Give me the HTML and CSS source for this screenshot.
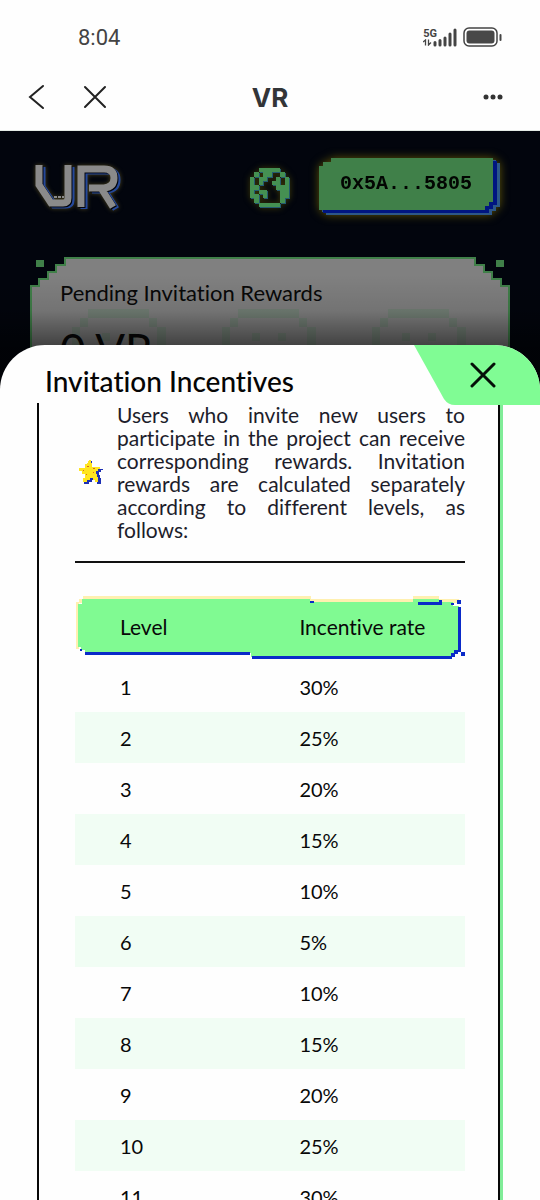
FILE: index.html
```
<!DOCTYPE html>
<html lang="en">
<head>
    <meta charset="UTF-8">
    <meta name="viewport" content="width=device-width, initial-scale=1.0">
    <title>VR</title>
    <link rel="stylesheet" href="styles.css">
</head>
<body>
    <div class="app">
        <!-- Status bar -->
        <div class="status-bar">
            <span class="time">8:04</span>
            <div class="status-icons">
                <div class="network">
                    <span>5G</span>
                    <svg width="9" height="7" viewBox="0 0 9 7" fill="none" stroke="#444" stroke-width="1.3"><path d="M0 3l2.500-2v5.500M5.500 0.500v5.500l2.500-2.500"/></svg>
                </div>
                <svg class="signal" width="24" height="19" viewBox="0 0 24 19" stroke="#444" stroke-width="3" stroke-linecap="round"><path d="M2 14.500v2.500M7 12.500v4.500M12 10v7M17 6v11M22 2v15"/></svg>
                <svg width="40" height="20" viewBox="0 0 40 20"><rect x="1" y="1" width="33" height="18" rx="5" fill="#fff" stroke="#444" stroke-width="1.500"/><rect x="3.500" y="3.500" width="28" height="13" rx="3" fill="#484848"/><path d="M37.500 8v5" stroke="#444" stroke-width="2" stroke-linecap="round"/></svg>
            </div>
        </div>

        <!-- Title bar -->
        <header class="title-bar">
            <div class="title-left">
                <button aria-label="Back"><svg width="26" height="26" viewBox="0 0 26 26"><path d="M19 2L6 13l13 11"/></svg></button>
                <button aria-label="Close page"><svg width="26" height="26" viewBox="0 0 26 26"><path d="M3 3l20 20M23 3L3 23"/></svg></button>
            </div>
            <h1>VR</h1>
            <button class="more" aria-label="More"><svg width="20" height="26" viewBox="0 0 20 26" fill="#333"><circle cx="3" cy="13" r="2.500"/><circle cx="10" cy="13" r="2.500"/><circle cx="17" cy="13" r="2.500"/></svg></button>
        </header>

        <main class="stage">
            <div class="site-header">
                <svg class="logo" width="86" height="44" viewBox="0 0 86 44" fill="none" stroke-width="7" role="img" aria-label="VR">
                    <g stroke="#24489a" transform="translate(3 2)">
                        <path d="M4 0V20L16 38H28Q33 38 33 33V0"/>
                        <path d="M46 42V4H69Q79 4 79 13T69 23H54M66 23L78 42"/>
                    </g>
                    <g stroke="#02050d" transform="translate(1 1)">
                        <path d="M4 0V20L16 38H28Q33 38 33 33V0"/>
                        <path d="M46 42V4H69Q79 4 79 13T69 23H54M66 23L78 42"/>
                    </g>
                    <g stroke="#8a8a8a">
                        <path d="M4 0V20L16 38H28Q33 38 33 33V0"/>
                        <path d="M46 42V4H69Q79 4 79 13T69 23H54M66 23L78 42"/>
                        <path d="M19 32H29" stroke-width="2" stroke-dasharray="3 1"/>
                    </g>
                </svg>
                <div class="account">
                    <button class="language" aria-label="Language">
                        <svg width="39" height="39" viewBox="0 0 9 9" shape-rendering="crispEdges">
                            <path d="M2 0h5v1h-5zM1 1h1v1h-1zM3 1h2v1h-2zM7 1h1v1h-1zM0 2h1v5h-1zM8 2h1v5h-1zM2 2h2v1h-2zM6 2h1v1h-1zM2 3h1v1h-1zM5 3h2v1h-2zM1 4h1v1h-1zM6 4h2v1h-2zM2 5h2v1h-2zM7 5h1v1h-1zM1 6h1v1h-1zM3 6h1v1h-1zM7 6h1v1h-1zM1 7h1v1h-1zM7 7h1v1h-1zM2 8h5v1h-5z"/>
                        </svg>
                    </button>
                    <button class="wallet"><span>0x5A...5805</span></button>
                </div>
            </div>

            <section class="rewards">
                <div class="rewards-frame">
                    <div class="rewards-body">
                        <h2>Pending Invitation Rewards</h2>
                        <p>0 VR</p>
                    </div>
                </div>
            </section>

            <!-- Bottom sheet -->
            <section class="sheet" aria-labelledby="sheet-title">
                <div class="sheet-header">
                    <h2 id="sheet-title">Invitation Incentives</h2>
                    <button class="sheet-close" aria-label="Close">
                        <svg width="126" height="60" viewBox="0 0 126 60"><path d="M0 0H126V60H41Q34 60 30 54Z" fill="#80fc94"/></svg>
                        <svg class="cross" width="26" height="26" viewBox="0 0 26 26"><path d="M2 2l22 22M24 2L2 24"/></svg>
                    </button>
                </div>
                <div class="panel">
                    <div class="intro">
                        <svg class="star" width="26" height="26" viewBox="0 0 26 26" shape-rendering="crispEdges">
                            <path d="M12 2h2v6h1v2h10v1h-2v2h-2v3h1v3h1v6h-4v-2h-2v-2h-3v2h-3v2h-5v-3h2v-4z" fill="#1c2fb4"/>
                            <path d="M11 1h2v3h1v4h8v2h-2v2h-2v3h1v3h1v5h-3v-2h-2v-2h-3v2h-3v2h-4v-4h2v-4h-3v-3h-3v-3h6v-4h2z" fill="#ffe51f"/>
                            <path d="M9 7h2v1h-2zM5 11h1v1h-1zM15 9h2v1h-2zM8 15h1v1h-1zM15 13h1v1h-1z" fill="#d56a20"/>
                        </svg>
                        <p>Users who invite new users to participate in the project can receive corresponding rewards. Invitation rewards are calculated separately according to different levels, as follows:</p>
                    </div>
                    <table class="rates">
                        <thead>
                            <tr><th scope="col">Level</th><th scope="col">Incentive rate</th></tr>
                        </thead>
                        <tbody>
                            <tr><td>1</td><td>30%</td></tr>
                            <tr><td>2</td><td>25%</td></tr>
                            <tr><td>3</td><td>20%</td></tr>
                            <tr><td>4</td><td>15%</td></tr>
                            <tr><td>5</td><td>10%</td></tr>
                            <tr><td>6</td><td>5%</td></tr>
                            <tr><td>7</td><td>10%</td></tr>
                            <tr><td>8</td><td>15%</td></tr>
                            <tr><td>9</td><td>20%</td></tr>
                            <tr><td>10</td><td>25%</td></tr>
                            <tr><td>11</td><td>30%</td></tr>
                        </tbody>
                    </table>
                </div>
            </section>
        </main>
    </div>
</body>
</html>
```
FILE: styles.css
```
* {
    box-sizing: border-box;
}

body, html {
    margin: 0;
    padding: 0;
    font-family: Lato, 'Noto Sans', sans-serif;
    font-variant-ligatures: none;
    background: #fefefe;
}

h1, h2, p {
    margin: 0;
}

button {
    padding: 0;
    border: none;
    background: none;
    cursor: pointer;
}

svg {
    display: block;
}

.app {
    height: 100vh;
    display: flex;
    flex-direction: column;
    overflow: hidden;
}

/* Status bar */
.status-bar {
    height: 66px;
    padding: 8px 37px 0 78px;
    display: flex;
    align-items: center;
    justify-content: space-between;
    color: #444;
}

.time {
    font: 22px Roboto, sans-serif;
}

.status-icons {
    display: flex;
    align-items: center;
    gap: 6px;
}

.network {
    font: bold 11px/11px Roboto, sans-serif;
}

.signal {
    margin-left: -10px;
}

/* Title bar */
.title-bar {
    height: 65px;
    padding: 0 37px 3px 24px;
    display: grid;
    grid-template-columns: 1fr auto 1fr;
    align-items: center;
    border-bottom: 1px solid #e4ebe6;
}

.title-left {
    display: flex;
    gap: 32px;
}

.title-bar h1 {
    font: bold 26px Inter, sans-serif;
    color: #333538;
    padding: 2px 0 0 13px;
}

.title-bar path {
    fill: none;
    stroke: #222;
    stroke-width: 2;
    stroke-linecap: round;
}

.more {
    justify-self: end;
}

/* Dimmed page behind the sheet */
.stage {
    flex: 1;
    min-height: 0;
    position: relative;
    background: #02050d;
}

.site-header {
    height: 112px;
    padding: 0 47px 0 35px;
    display: flex;
    align-items: center;
    justify-content: space-between;
}

.logo {
    overflow: visible;
    filter: drop-shadow(0 0 2px #4a421c);
}

.account {
    display: flex;
    align-items: center;
    gap: 30px;
}

.language svg {
    fill: #459052;
    filter: drop-shadow(1px 1px 0 #235a70) drop-shadow(0 0 3px #3c3806);
}

.wallet {
    margin-bottom: 6px;
    filter: drop-shadow(4px 3px 0 #001580) drop-shadow(3px 2px 0 #2d5788) drop-shadow(0 0 5px #5c5205);
}

.wallet span {
    display: block;
    padding: 0 21px;
    font: bold 20px/52px 'Liberation Mono', monospace;
    color: #020502;
    background: #408049;
    clip-path: polygon(12px 0, 100% 0, 100% calc(100% - 8px), calc(100% - 4px) calc(100% - 8px), calc(100% - 4px) calc(100% - 4px), calc(100% - 8px) calc(100% - 4px), calc(100% - 8px) 100%, 0 100%, 0 8px, 4px 8px, 4px 4px, 12px 4px);
}

.rewards {
    margin: 14px 30px 0;
    background:
        linear-gradient(#408049, #408049) 6px 3px / 8px 7px no-repeat,
        linear-gradient(#408049, #408049) calc(100% - 6px) 3px / 8px 7px no-repeat;
}

.rewards-frame,
.rewards-body {
    clip-path: polygon(
        0 28px, 8px 28px, 8px 21px, 17px 21px, 17px 14px, 25px 14px, 25px 7px, 34px 7px, 34px 0,
        calc(100% - 34px) 0, calc(100% - 34px) 7px, calc(100% - 25px) 7px, calc(100% - 25px) 14px, calc(100% - 17px) 14px, calc(100% - 17px) 21px, calc(100% - 8px) 21px, calc(100% - 8px) 28px, 100% 28px,
        100% 100%, 0 100%);
}

.rewards-frame {
    padding: 2px;
    background: #408049;
}

.rewards-body {
    height: 150px;
    padding: 20px 28px;
    color: #080808;
    background: #808080 url("data:image/svg+xml,%3Csvg xmlns='http://www.w3.org/2000/svg' width='150' height='98' fill='%23458050' fill-opacity='.22'%3E%3Cpath d='M16 0h61v9H16zM8 9h8v9H8zM77 9h8v9h-8zM0 18h8v80H0zM85 18h9v80h-9zM30 24h8v8h-8zM56 24h8v8h-8z'/%3E%3C/svg%3E") 40px 50px repeat-x;
}

.rewards-body h2 {
    font-size: 22px;
    line-height: 28px;
    font-weight: normal;
}

.rewards-body p {
    margin-top: 18px;
    font-size: 44px;
    line-height: 48px;
}

/* Shade over the page just above the sheet */
.stage::after {
    content: '';
    position: absolute;
    top: 144px;
    left: 0;
    right: 0;
    height: 120px;
    background: linear-gradient(transparent, rgba(0, 0, 0, 0.1) 30%, rgba(0, 0, 0, 0.5) 60%);
}

/* Bottom sheet */
.sheet {
    position: absolute;
    top: 214px;
    right: 0;
    bottom: 0;
    left: 0;
    z-index: 1;
    overflow: hidden;
    background: #fefefe;
    border-radius: 45px 45px 0 0;
}

.sheet-header {
    height: 58px;
    padding: 14px 0 0 45px;
    display: flex;
    align-items: center;
}

.sheet-header h2 {
    font-size: 28px;
    line-height: 36px;
    font-weight: 500;
    color: #050505;
}

.sheet-close {
    position: absolute;
    top: 0;
    right: 0;
}

.sheet-close .cross {
    position: absolute;
    top: 17px;
    right: 44px;
    stroke: #050f08;
    stroke-width: 3;
    stroke-linecap: round;
}

.panel {
    margin: 0 40px 0 37px;
    padding: 0 33px 0 36px;
    border: solid #080808;
    border-width: 0 2px;
    box-shadow: 3px 0 0 #80ec98;
}

.intro {
    display: flex;
    align-items: center;
    gap: 13px;
    padding: 0 0 20px 3px;
    border-bottom: 2px solid #111;
}

.star {
    flex: none;
}

.intro p {
    font-size: 21px;
    line-height: 23px;
    text-align: justify;
    color: #1d1d2b;
}

/* Incentive rates */
.rates {
    width: 100%;
    margin-top: 32px;
    border-collapse: collapse;
    table-layout: fixed;
    font-size: 20px;
    color: #080808;
}

.rates th,
.rates td {
    padding: 0 0 0 45px;
    text-align: left;
    font-weight: normal;
}

.rates th {
    height: 66px;
    padding-bottom: 4px;
    font-size: 21px;
}

.rates th:first-child {
    width: 46%;
}

/* Pixel frame: yellow glow, green plate, blue edge */
.rates thead tr {
    background: url("data:image/svg+xml,%3Csvg xmlns='http://www.w3.org/2000/svg' viewBox='0 0 390 66' preserveAspectRatio='none' shape-rendering='crispEdges'%3E%3Cpath fill='%23fff0b0' d='M8 1h228v3h102v-3h26v3h20v4H1v-1h3v-3h4zM1 8h3v46h-3z'/%3E%3Cpath fill='%2380fa92' d='M7 4h228v3h103v-3h26v3h14v4h6v44h-4v4h-4v3H176v-4H10v-3H6v-3H3V9h4z'/%3E%3Cpath fill='%230a2ac8' d='M10 57h165v3H10zM177 61h200v3H177zM376 58h4v4h-4zM379 55h4v4h-4zM383 12h3v45h-3zM343 7h24v3h-24zM364 5h3v3h-3zM235 6h4v2h-4zM376 8h3v2h-3zM382 5h4v4h-4zM386 57h4v4h-4zM5 54h2v2h-2z'/%3E%3C/svg%3E") 0 0 / 100% 100% no-repeat;
}

.rates td {
    height: 51px;
}

.rates tbody tr:nth-child(even) {
    background: #f1fdf4;
}
```
